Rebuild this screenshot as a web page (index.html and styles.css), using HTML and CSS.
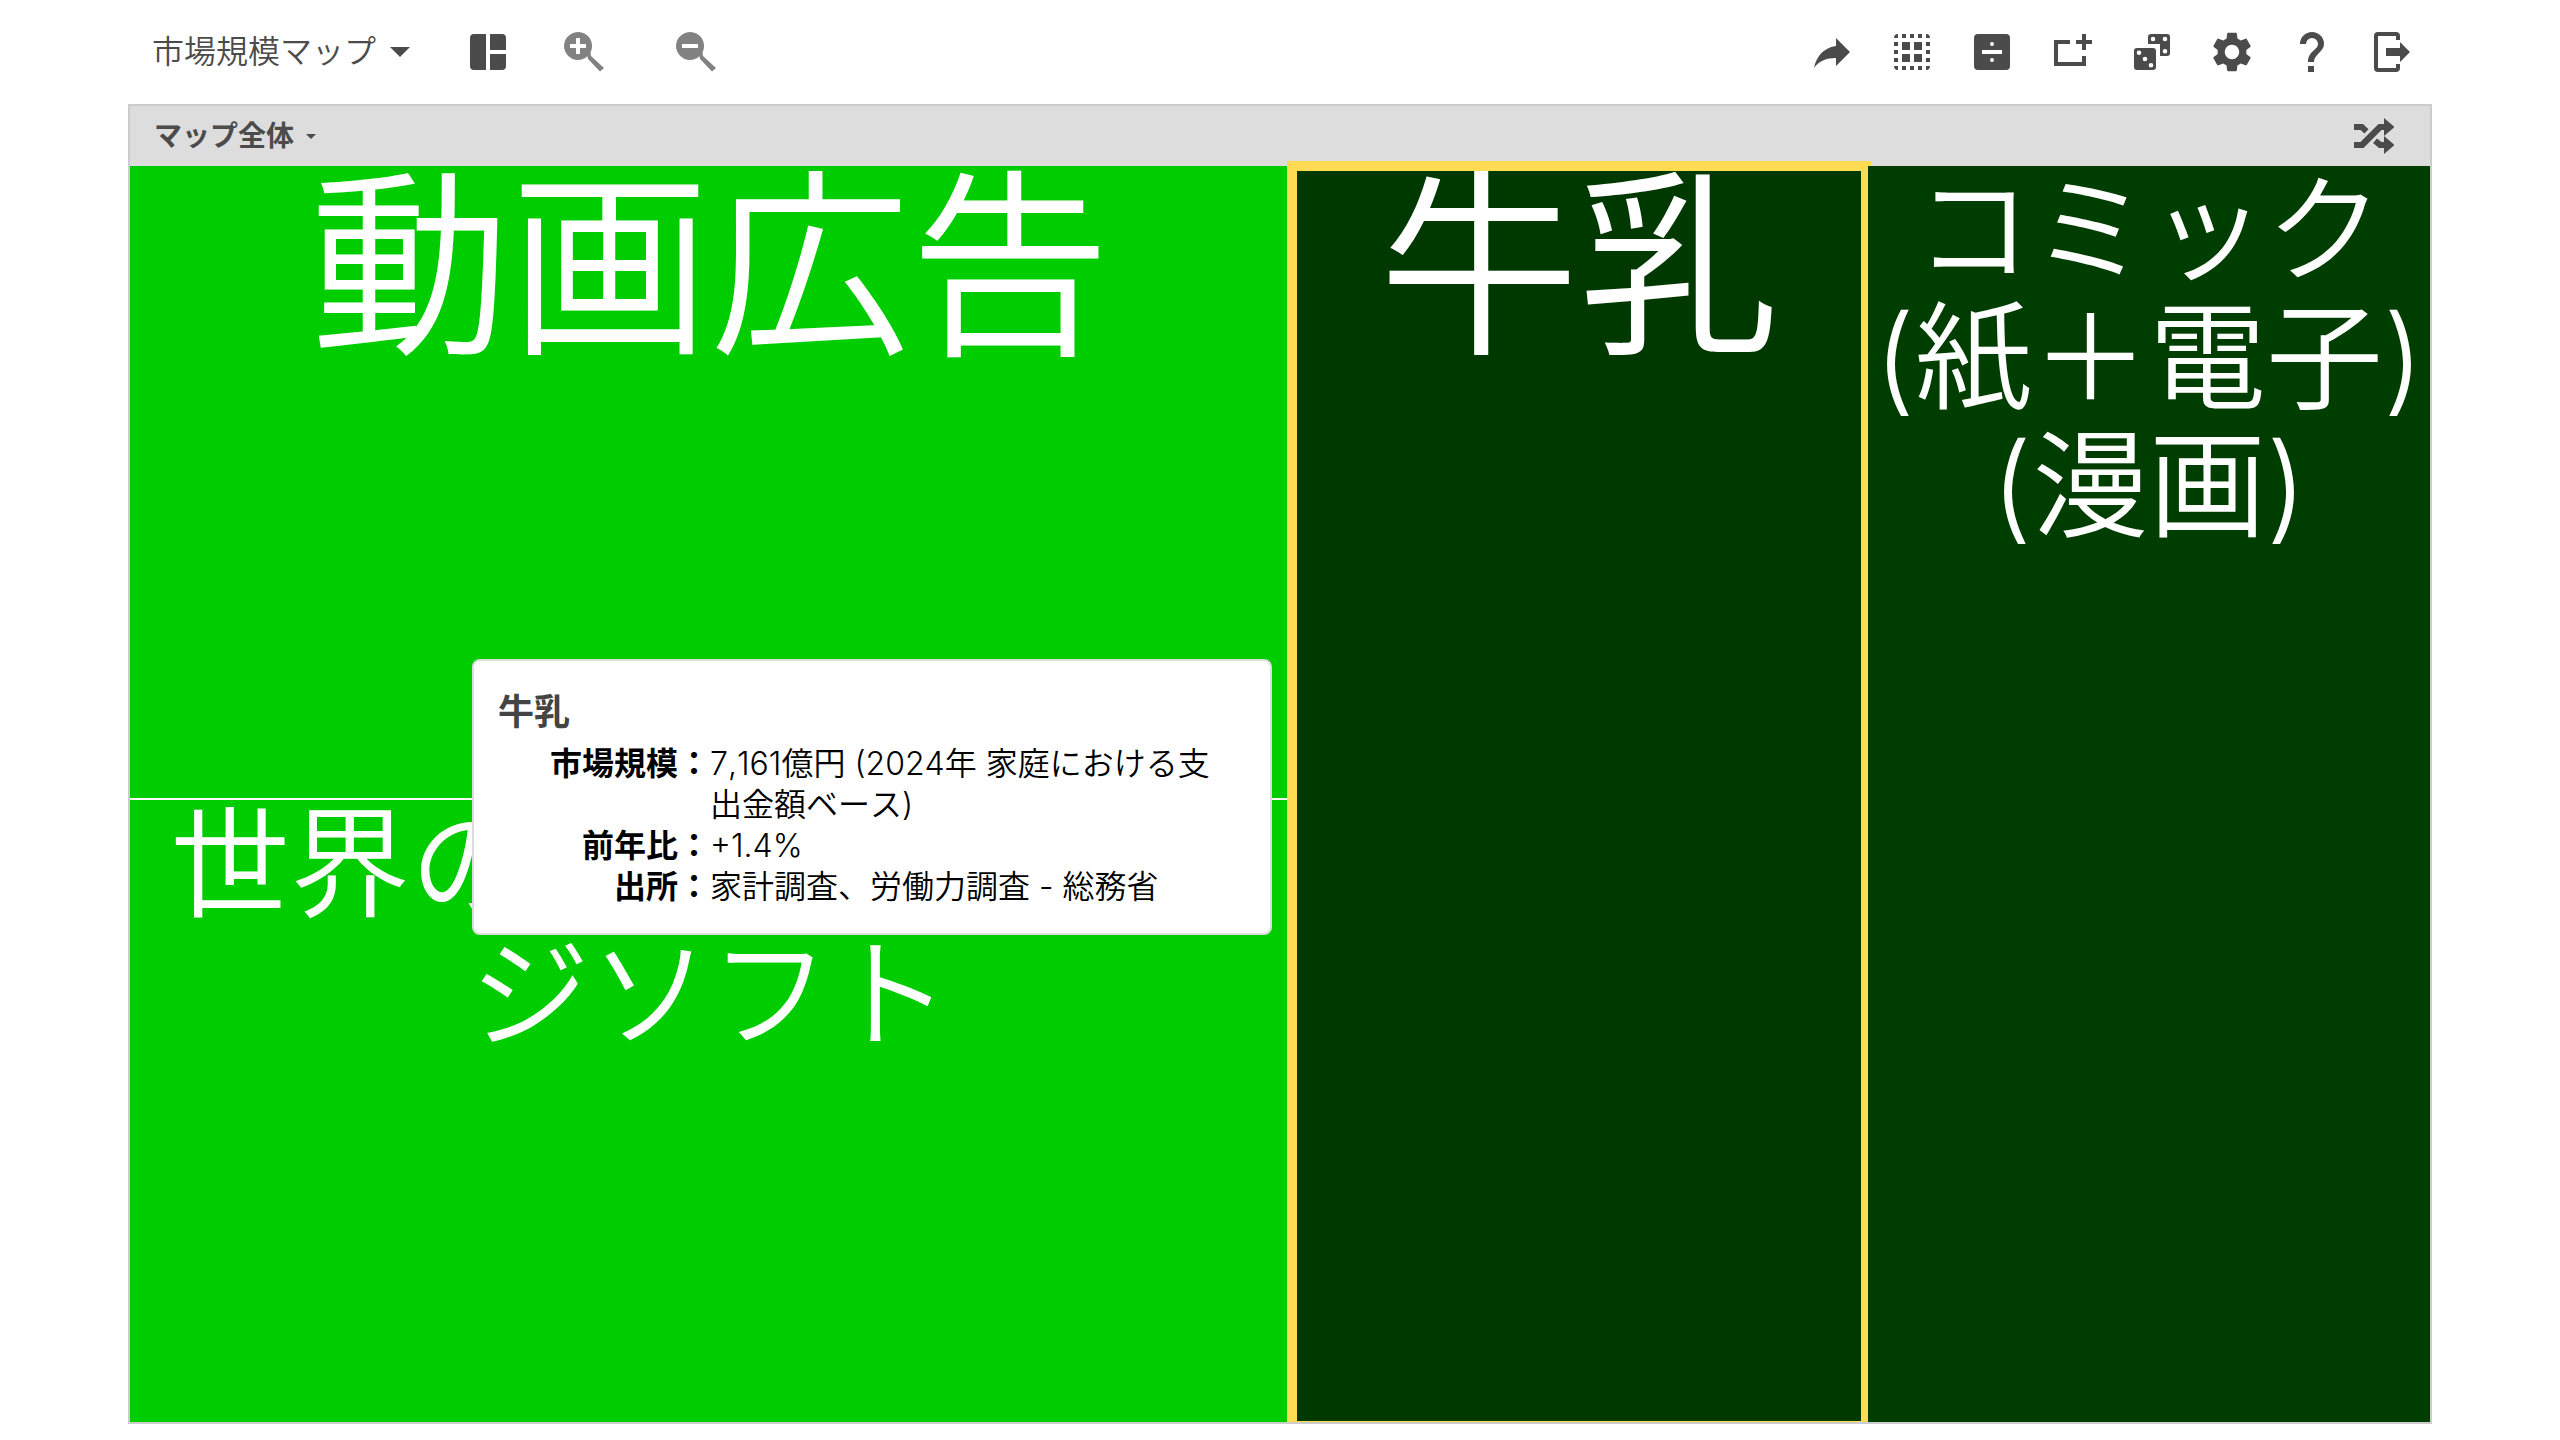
FILE: index.html
```html
<!DOCTYPE html>
<html lang="ja">
<head>
<meta charset="utf-8">
<title>市場規模マップ</title>
<link rel="stylesheet" href="styles.css">
</head>
<body>
<header class="toolbar">
  <button class="menu" type="button">市場規模マップ<span class="caret"></span></button>
  <button class="tool tool-layout" type="button" aria-label="レイアウト">
    <svg viewBox="0 0 48 48"><path d="M10 6H22V42H10Q6 42 6 38V10Q6 6 10 6ZM26 6H38Q42 6 42 10V22H26ZM26 26H42V38Q42 42 38 42H26Z"/></svg>
  </button>
  <button class="tool tool-zoom" type="button" aria-label="拡大">
    <svg viewBox="0 0 48 48"><path fill-rule="evenodd" d="M18 4A14 14 0 0 1 30.500 24.500L31 28L44 40L40 43.500L28 31L27.500 28.300A14 14 0 1 1 18 4ZM16 10V16H10V20H16V26H20V20H26V16H20V10Z"/></svg>
  </button>
  <button class="tool tool-zoom" type="button" aria-label="縮小">
    <svg viewBox="0 0 48 48"><path fill-rule="evenodd" d="M18 4A14 14 0 0 1 30.500 24.500L31 28L44 40L40 43.500L28 31L27.500 28.300A14 14 0 1 1 18 4ZM10 16V20H26V16Z"/></svg>
  </button>
  <nav class="actions">
    <button class="tool" type="button" aria-label="共有">
      <svg viewBox="0 0 48 48"><path d="M28 10L42 24L28 38V30C18 30 11 33 6 40C8 30 14 20 28 18Z"/></svg>
    </button>
    <button class="tool" type="button" aria-label="すべて選択">
      <svg viewBox="0 0 48 48"><path d="M6 10Q6 6 10 6V10ZM14 6H18V10H14ZM22 6H26V10H22ZM30 6H34V10H30ZM38 6Q42 6 42 10H38ZM6 14H10V18H6ZM6 22H10V26H6ZM6 30H10V34H6ZM38 14H42V18H38ZM38 22H42V26H38ZM38 30H42V34H38ZM6 38H10V42Q6 42 6 38ZM14 38H18V42H14ZM22 38H26V42H22ZM30 38H34V42H30ZM38 38H42Q42 42 38 42ZM14 14H22V22H14ZM26 14H34V22H26ZM14 26H22V34H14ZM26 26H34V34H26Z"/></svg>
    </button>
    <button class="tool" type="button" aria-label="分割">
      <svg viewBox="0 0 48 48"><path fill-rule="evenodd" d="M10 6H38Q42 6 42 10V38Q42 42 38 42H10Q6 42 6 38V10Q6 6 10 6ZM14 22V26H34V22ZM24 14A2 2 0 0 0 24 18A2 2 0 0 0 24 14ZM24 30A2 2 0 0 0 24 34A2 2 0 0 0 24 30Z"/></svg>
    </button>
    <button class="tool" type="button" aria-label="追加">
      <svg viewBox="0 0 48 48"><path d="M6 12H22V16H10V34H34V28H38V38H6ZM34 6H38V12H44V16H38V22H34V16H28V12H34Z"/></svg>
    </button>
    <button class="tool" type="button" aria-label="ランダム">
      <svg viewBox="0 0 48 48"><path fill-rule="evenodd" d="M9 20H25Q28 20 28 23V39Q28 42 25 42H9Q6 42 6 39V23Q6 20 9 20ZM11 22.500A2.300 2.300 0 0 0 11 27.100A2.300 2.300 0 0 0 11 22.500ZM17 28.700A2.300 2.300 0 0 0 17 33.300A2.300 2.300 0 0 0 17 28.700ZM23 34.900A2.300 2.300 0 0 0 23 39.500A2.300 2.300 0 0 0 23 34.900ZM23 6H39Q42 6 42 9V25Q42 28 39 28H32V16H20V9Q20 6 23 6ZM25 8.700A2.300 2.300 0 0 0 25 13.300A2.300 2.300 0 0 0 25 8.700ZM37 8.700A2.300 2.300 0 0 0 37 13.300A2.300 2.300 0 0 0 37 8.700ZM37 20.900A2.300 2.300 0 0 0 37 25.500A2.300 2.300 0 0 0 37 20.900Z"/></svg>
    </button>
    <button class="tool" type="button" aria-label="設定">
      <svg viewBox="0 0 24 24"><path d="M19.140 12.940c.04-.3.060-.61.060-.94s-.02-.64-.07-.94l2.030-1.580c.18-.14.230-.41.120-.61l-1.920-3.320c-.12-.22-.37-.29-.59-.22l-2.390.96c-.5-.38-1.030-.7-1.620-.94l-.36-2.540c-.04-.24-.24-.41-.48-.41h-3.840c-.24 0-.43.170-.47.410l-.36 2.540c-.59.240-1.130.570-1.620.940l-2.390-.96c-.22-.08-.47 0-.59.220L2.740 8.870c-.12.210-.08.470.120.610l2.030 1.580c-.05.3-.09.630-.09.940s.02.640.07.940l-2.030 1.580c-.18.140-.23.410-.12.610l1.920 3.320c.12.220.370.290.590.220l2.390-.96c.5.380 1.030.7 1.620.940l.36 2.540c.05.240.240.410.480.410h3.840c.24 0 .440-.17.470-.41l.36-2.540c.59-.24 1.130-.56 1.620-.94l2.390.96c.22.080.470 0 .590-.22l1.920-3.320c.12-.22.070-.47-.12-.61l-2.010-1.580zM12 15.600c-1.980 0-3.600-1.620-3.600-3.600s1.620-3.600 3.600-3.600 3.600 1.620 3.600 3.600-1.620 3.600-3.600 3.600z"/></svg>
    </button>
    <button class="tool" type="button" aria-label="ヘルプ">
      <svg viewBox="0 0 48 48"><path d="M20 38H26V44H20ZM12 16A12 12 0 0 1 36 16C36 24 26 26 26 34H20C20 23 30 22 30 16A6 6 0 0 0 18 16Z"/></svg>
    </button>
    <button class="tool" type="button" aria-label="ログアウト">
      <svg viewBox="0 0 48 48"><path d="M10 4H28Q32 4 32 8V12H28V8H10V40H28V36H32V40Q32 44 28 44H10Q6 44 6 40V8Q6 4 10 4ZM18 20H32V14L42 24L32 34V28H18Z"/></svg>
    </button>
  </nav>
</header>

<main class="frame">
  <div class="crumbs">
    <button class="crumb" type="button">マップ全体<span class="caret caret-small"></span></button>
    <button class="shuffle" type="button" aria-label="シャッフル">
      <svg viewBox="0 0 40 36"><path d="M0 6H9L14.500 11.200L10.500 15.500L6.500 12H0ZM0 24H6.500L24.500 6H30V0L40.500 9L30 18V12H27.500L9.500 30H0ZM23 20.500L27.500 24H30V18L40.500 27L30 36V30H25L19 25Z"/></svg>
    </button>
  </div>
  <div class="map">
    <div class="column">
      <section class="cell bright"><h2 class="name name-large">動画広告</h2></section>
      <section class="cell bright"><h2 class="name">世界の業務パッケージソフト</h2></section>
    </div>
    <section class="cell dark selected"><h2 class="name name-large">牛乳</h2></section>
    <section class="cell dim"><h2 class="name name-small">コミック<br>(紙＋電子)<br>(漫画)</h2></section>
    <aside class="tip">
      <h3 class="tip-title">牛乳</h3>
      <dl class="facts">
        <dt>市場規模：</dt><dd>7,161億円 (2024年 家庭における支出金額ベース)</dd>
        <dt>前年比：</dt><dd>+1.4%</dd>
        <dt>出所：</dt><dd>家計調査、労働力調査 - 総務省</dd>
      </dl>
    </aside>
  </div>
</main>
</body>
</html>
```
FILE: styles.css
```css
* { box-sizing: border-box; }

body {
  margin: 0;
  padding: 0 5% 16px;
  min-height: 100vh;
  display: flex;
  flex-direction: column;
  background: #fff;
  color: #4b4b4b;
  font-family: Inter, "Noto Sans CJK JP", sans-serif;
  font-weight: 350;
}

button {
  margin: 0;
  padding: 0;
  border: 0;
  background: none;
  color: inherit;
  font: inherit;
}

svg { display: block; width: 100%; height: 100%; fill: currentColor; }

.toolbar {
  display: flex;
  align-items: center;
  height: 104px;
  padding: 0 16px 0 24px;
}

.menu {
  display: flex;
  align-items: center;
  gap: 14px;
  font-size: 32px;
  line-height: 48px;
}

.caret {
  border: 10px solid transparent;
  border-top-color: currentColor;
  border-bottom: 0;
}

.caret-small { border-width: 5px 5px 0; }

.tool { width: 48px; height: 48px; flex: none; }
.tool-layout { margin-left: 54px; }
.tool-zoom { margin-left: 48px; color: #828282; }
.tool-zoom + .tool-zoom { margin-left: 64px; }

.actions { display: flex; gap: 32px; margin-left: auto; }

.frame {
  flex: 1;
  display: flex;
  flex-direction: column;
  overflow: hidden;
  border: 2px solid #ccc;
}

.crumbs {
  display: flex;
  justify-content: space-between;
  align-items: center;
  height: 60px;
  padding: 0 36px 0 24px;
  background: #ddd;
}

.crumb {
  display: flex;
  align-items: center;
  gap: 12px;
  font-size: 28px;
  line-height: 40px;
  font-weight: 700;
}

.shuffle { width: 40px; height: 36px; }

.map {
  position: relative;
  flex: 1;
  display: grid;
  grid-template-columns: 1160fr 574fr 562fr;
  gap: 2px;
}

.column { display: grid; grid-template-rows: 632fr 622fr; gap: 2px; }

.cell { position: relative; color: #fff; }
.bright { background: #00cd00; }
.dark { background: #003900; }
.dim { background: #003d00; z-index: 1; }

.selected::after {
  content: "";
  position: absolute;
  inset: -5px -5px -9px;
  border: 10px solid #ffdc52;
}

.name {
  margin: 0;
  font-size: 120px;
  line-height: 130px;
  font-weight: inherit;
  text-align: center;
}

.name-large { font-size: 200px; line-height: 200px; }
.name-small { font-size: 117px; line-height: 128px; }

.tip {
  position: absolute;
  top: 493px;
  left: 342px;
  z-index: 2;
  width: 800px;
  padding: 24px 24px 26px;
  border: 2px solid #ddd;
  border-radius: 8px;
  background: #fff;
  color: #000;
}

.tip-title {
  margin: 0 0 4px;
  font-size: 36px;
  line-height: 54px;
  color: #444;
}

.facts {
  display: grid;
  grid-template-columns: 212px 1fr;
  margin: 0;
  padding-right: 20px;
  font-size: 32px;
  line-height: 41px;
  font-kerning: none;
}

dt { font-weight: 700; text-align: right; }
dd { margin: 0; }
```
